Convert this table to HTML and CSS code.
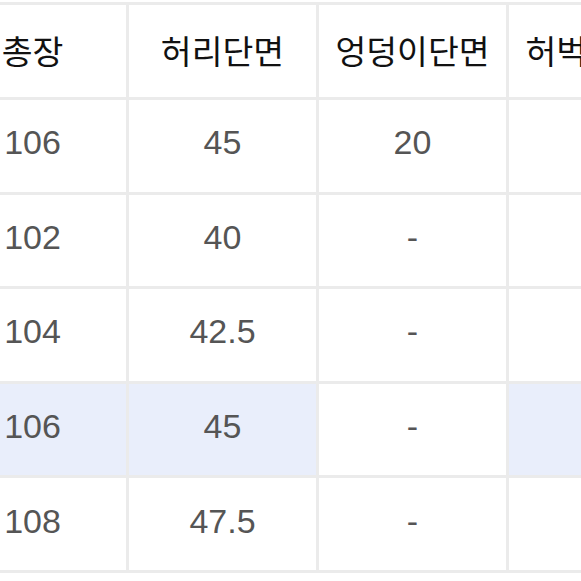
FILE: index.html
```html
<!DOCTYPE html>
<html lang="ko">
<head>
<meta charset="utf-8">
<link rel="stylesheet" href="styles.css">
</head>
<body>
<div class="size-table">
  <div class="cell head">총장</div>
  <div class="cell head">허리단면</div>
  <div class="cell head">엉덩이단면</div>
  <div class="cell head">허벅지단면</div>

  <div class="cell">106</div>
  <div class="cell">45</div>
  <div class="cell">20</div>
  <div class="cell"></div>

  <div class="cell">102</div>
  <div class="cell">40</div>
  <div class="cell">-</div>
  <div class="cell"></div>

  <div class="cell">104</div>
  <div class="cell">42.5</div>
  <div class="cell">-</div>
  <div class="cell"></div>

  <div class="cell hl">106</div>
  <div class="cell hl">45</div>
  <div class="cell">-</div>
  <div class="cell hl"></div>

  <div class="cell">108</div>
  <div class="cell">47.5</div>
  <div class="cell">-</div>
  <div class="cell"></div>
</div>
</body>
</html>
```
FILE: styles.css
```css
html, body {
  margin: 0;
  padding: 0;
  background: #fff;
  overflow: hidden;
  width: 581px;
  height: 581px;
}
.size-table {
  display: grid;
  grid-template-columns: repeat(4, 187px);
  grid-template-rows: 92px repeat(5, 91.6px);
  gap: 3px;
  padding: 3px;
  background: #ebebeb;
  width: max-content;
  margin: 2px 0 0 -64px;
  font-family: "Liberation Sans", "Noto Sans CJK KR", sans-serif;
}
.cell {
  background: #fff;
  display: flex;
  align-items: center;
  justify-content: center;
  padding-bottom: 6px;
  box-sizing: border-box;
  font-size: 34px;
  color: #555;
  white-space: nowrap;
}
.cell.head {
  font-family: "Noto Sans CJK KR", sans-serif;
  color: #111;
  font-size: 33.5px;
  padding-bottom: 4px;
}
.cell.hl {
  background: #e9eefb;
}
```
